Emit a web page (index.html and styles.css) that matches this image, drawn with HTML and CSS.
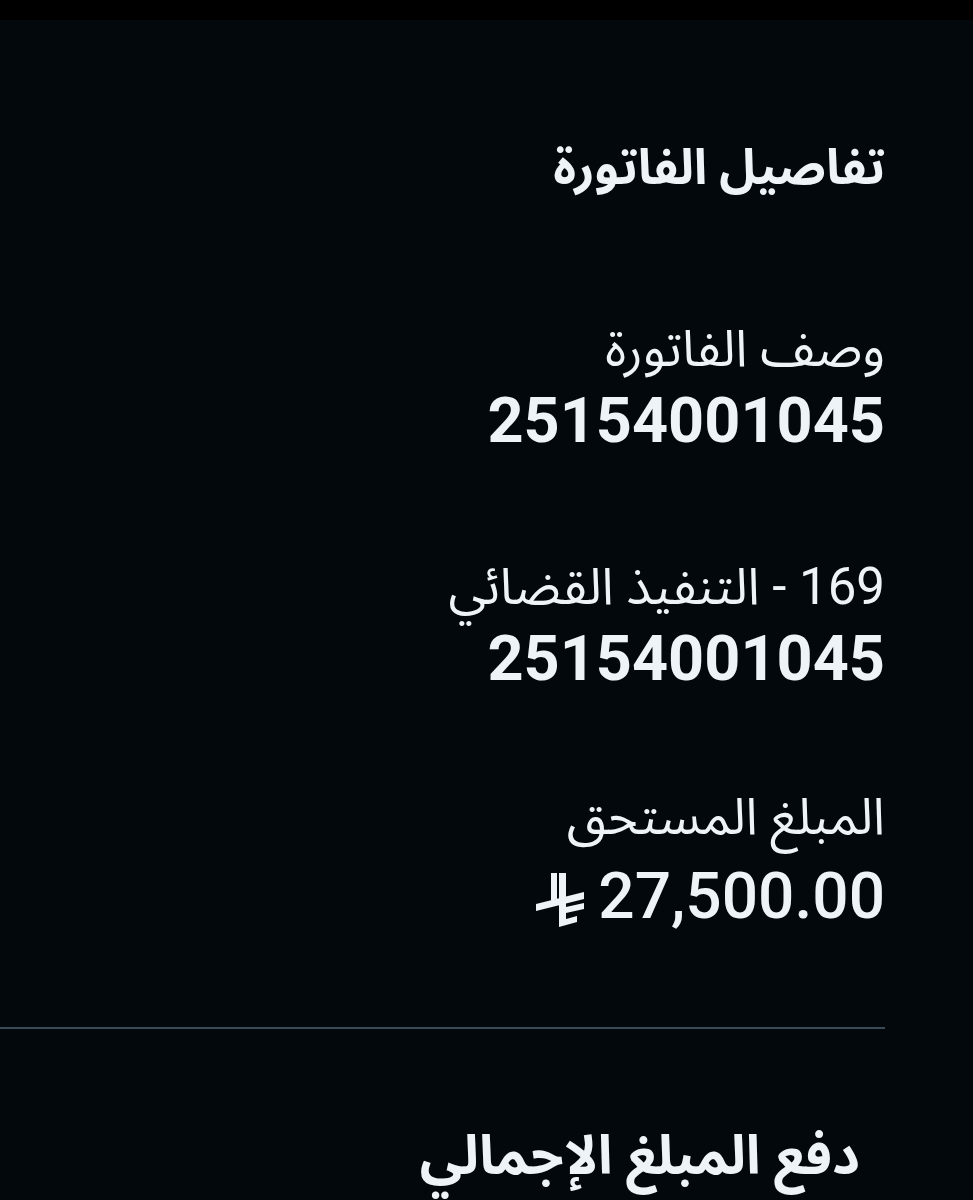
FILE: index.html
```html
<!DOCTYPE html>
<html lang="ar">
  <head>
    <meta charset="utf-8">
    <title>تفاصيل الفاتورة</title>
    <link rel="stylesheet" href="styles.css">
  </head>
  <body>
    <!-- شريط الحالة -->
    <div class="status-bar"></div>

    <!-- تفاصيل الفاتورة -->
    <main class="sheet" dir="rtl">
      <h1 class="title">تفاصيل الفاتورة</h1>

      <div class="field">
        <div class="label">وصف الفاتورة</div>
        <div class="value">25154001045</div>
      </div>

      <div class="field">
        <div class="label">169 - التنفيذ القضائي</div>
        <div class="value">25154001045</div>
      </div>

      <div class="field field-amount">
        <div class="label">المبلغ المستحق</div>
        <div class="value amount">
          <span>27,500.00</span>
          <!-- رمز الريال السعودي -->
          <svg class="riyal" viewBox="8 6 52 58" aria-hidden="true">
            <polygon points="25,8 31,8 31,34 25,36" />
            <polygon points="33,8 40,8 40,56 33,58" />
            <polygon points="10,39 58,27 58,34 10,46" />
            <polygon points="40,42 58,38 58,44 40,48" />
            <polygon points="33,56 51,51 51,57 33,62" />
          </svg>
        </div>
      </div>

      <div class="divider"></div>

      <h2 class="pay">دفع المبلغ الإجمالي</h2>
    </main>
  </body>
</html>
```

FILE: styles.css
```css
/* عام */
body {
  margin: 0;
  padding: 0;
  background-color: #03080c;
  color: #eef3f7;
  font-family: Roboto, "Noto Sans Arabic", "DejaVu Sans", sans-serif;
  height: 1200px;
  overflow: hidden;
}

.status-bar {
  height: 20px;
  background-color: #000;
}

.sheet {
  width: 885px;
  text-align: right;
}

.title {
  margin: 0;
  padding-top: 116px;
  font-size: 49px;
  font-weight: bold;
  line-height: 64px;
}

.field {
  margin-top: 117px;
}

.field + .field {
  margin-top: 94px;
}

.field + .field-amount {
  margin-top: 86px;
}

.label {
  font-size: 51px;
  line-height: 64px;
}

.value {
  font-size: 63px;
  font-weight: bold;
  line-height: 80px;
}

/* المبلغ مع رمز العملة */
.amount {
  display: flex;
  align-items: center;
  gap: 12px;
  font-size: 64px;
  font-weight: 500;
  line-height: 96px;
}

.riyal {
  width: 52px;
  height: 58px;
  margin-top: 6px;
  fill: #eef3f7;
}

.divider {
  margin-top: 82px;
  height: 2px;
  background-color: #3a4a57;
}

.pay {
  margin: 0;
  padding-top: 87px;
  padding-right: 25px;
  font-size: 54px;
  font-weight: bold;
  line-height: 80px;
}
```
